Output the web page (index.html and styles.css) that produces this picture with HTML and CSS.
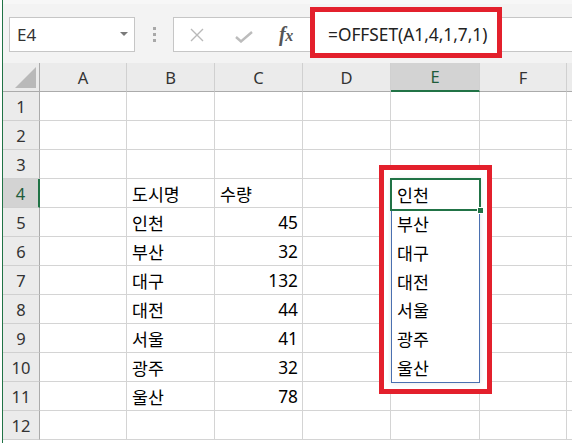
FILE: index.html
```html
<!DOCTYPE html>
<html lang="ko">
<head>
<meta charset="utf-8">
<title>OFFSET</title>
<link rel="stylesheet" href="styles.css">
</head>
<body>
<div class="app">
  <div class="edge"></div>
  <div class="main">
    <div class="fbar">
      <div class="namebox">
        <span class="name">E4</span>
        <span class="caret"></span>
      </div>
      <div class="grip"><i></i><i></i><i></i></div>
      <div class="formula">
        <svg class="ico" width="16" height="16" viewBox="0 0 16 16"><path d="M2 2 L14 14 M14 2 L2 14" stroke="#b9b9b9" stroke-width="1.4" fill="none"/></svg>
        <svg class="ico chk" width="18" height="12" viewBox="0 0 18 12"><path d="M1 6 L6 10.5 L17 1" stroke="#bcbcbc" stroke-width="2.4" fill="none"/></svg>
        <span class="fx">f<span class="x">x</span></span>
      </div>
    </div>
    <div class="sheet">
      <div class="corner"><span class="tri"></span></div>
      <div class="ch">A</div><div class="ch">B</div><div class="ch">C</div><div class="ch">D</div><div class="ch sel">E</div><div class="ch">F</div><div class="ch last"></div>

      <div class="rh">1</div><div class="c"></div><div class="c"></div><div class="c"></div><div class="c"></div><div class="c"></div><div class="c"></div><div class="c"></div>
      <div class="rh">2</div><div class="c"></div><div class="c"></div><div class="c"></div><div class="c"></div><div class="c"></div><div class="c"></div><div class="c"></div>
      <div class="rh">3</div><div class="c"></div><div class="c"></div><div class="c"></div><div class="c"></div><div class="c"></div><div class="c"></div><div class="c"></div>
      <div class="rh sel">4</div><div class="c"></div><div class="c">도시명</div><div class="c">수량</div><div class="c"></div><div class="c"></div><div class="c"></div><div class="c"></div>
      <div class="rh">5</div><div class="c"></div><div class="c">인천</div><div class="c num">45</div><div class="c"></div><div class="c"></div><div class="c"></div><div class="c"></div>
      <div class="rh">6</div><div class="c"></div><div class="c">부산</div><div class="c num">32</div><div class="c"></div><div class="c"></div><div class="c"></div><div class="c"></div>
      <div class="rh">7</div><div class="c"></div><div class="c">대구</div><div class="c num">132</div><div class="c"></div><div class="c"></div><div class="c"></div><div class="c"></div>
      <div class="rh">8</div><div class="c"></div><div class="c">대전</div><div class="c num">44</div><div class="c"></div><div class="c"></div><div class="c"></div><div class="c"></div>
      <div class="rh">9</div><div class="c"></div><div class="c">서울</div><div class="c num">41</div><div class="c"></div><div class="c"></div><div class="c"></div><div class="c"></div>
      <div class="rh">10</div><div class="c"></div><div class="c">광주</div><div class="c num">32</div><div class="c"></div><div class="c"></div><div class="c"></div><div class="c"></div>
      <div class="rh">11</div><div class="c"></div><div class="c">울산</div><div class="c num">78</div><div class="c"></div><div class="c"></div><div class="c"></div><div class="c"></div>
      <div class="rh">12</div><div class="c"></div><div class="c"></div><div class="c"></div><div class="c"></div><div class="c"></div><div class="c"></div><div class="c"></div>
    </div>
  </div>

  <div class="mark mark-formula">=OFFSET(A1,4,1,7,1)</div>

  <div class="mark mark-spill">
    <div class="spill">
      <div class="si active">인천<span class="handle"></span></div>
      <div class="si">부산</div>
      <div class="si">대구</div>
      <div class="si">대전</div>
      <div class="si">서울</div>
      <div class="si">광주</div>
      <div class="si">울산</div>
    </div>
  </div>
</div>
</body>
</html>
```
FILE: styles.css
```css
* { box-sizing: border-box; }
html, body { margin: 0; padding: 0; }
body {
  width: 572px;
  height: 443px;
  overflow: hidden;
  background: #fff;
  font-family: "Noto Sans", "Noto Sans CJK KR", sans-serif;
  color: #000;
}
.app {
  position: relative;
  display: flex;
  width: 572px;
  height: 443px;
}
.edge {
  width: 3px;
  flex: none;
  background: #fff;
  border-right: 1px solid #217346;
}
.main {
  flex: 1;
  display: flex;
  flex-direction: column;
  min-width: 0;
}
.fbar {
  height: 63px;
  flex: none;
  background: #f3f3f3;
  border-top: 4px solid #f7f7f7;
  padding-top: 13px;
  padding-bottom: 11px;
  display: flex;
}
.namebox {
  margin-left: 6px;
  width: 126px;
  background: #fff;
  border: 1px solid #c6c6c6;
  display: flex;
  align-items: center;
  justify-content: space-between;
  padding: 0 6px 0 7px;
}
.name {
  font-size: 17px;
  color: #333;
  line-height: 1;
}
.caret {
  width: 0;
  height: 0;
  border-left: 4px solid transparent;
  border-right: 4px solid transparent;
  border-top: 4px solid #7a7a7a;
  margin-bottom: 1px;
}
.grip {
  width: 38px;
  display: flex;
  flex-direction: column;
  align-items: center;
  justify-content: center;
  gap: 3px;
}
.grip i {
  width: 3px;
  height: 3px;
  background: #a8a8a8;
}
.formula {
  flex: 1;
  background: #fff;
  border: 1px solid #c6c6c6;
  border-right: none;
  display: flex;
  align-items: center;
  padding-left: 15px;
}
.ico { display: block; flex: none; }
.chk { margin-left: 30px; margin-top: 4px; }
.fx {
  margin-left: 26px;
  font-family: "Liberation Serif", serif;
  font-style: italic;
  font-weight: bold;
  font-size: 20px;
  color: #555;
  letter-spacing: -0.5px;
}
.fx .x { font-size: 16px; }

.sheet {
  display: grid;
  grid-template-columns: 37px 87px 88px 88px 88px 89px 87px 1fr;
  grid-auto-rows: 29px;
  font-size: 17.3px;
}
.corner {
  background: #ebebeb;
  border-right: 1px solid #ababab;
  border-bottom: 1px solid #ababab;
  display: flex;
  align-items: flex-end;
  justify-content: flex-end;
  padding: 0 3px 3px 0;
}
.tri {
  width: 0;
  height: 0;
  border-left: 21px solid transparent;
  border-bottom: 21px solid #b9b9b9;
}
.ch {
  background: #ebebeb;
  border-right: 1px solid #d0d0d0;
  border-bottom: 1px solid #ababab;
  display: flex;
  align-items: center;
  justify-content: center;
  font-size: 16.5px;
  color: #333;
}
.ch.sel {
  background: #d3d3d3;
  border-bottom: 2px solid #217346;
  color: #1e5c3a;
}
.ch.last { border-right: none; }
.rh {
  background: #ebebeb;
  border-right: 1px solid #ababab;
  border-bottom: 1px solid #d0d0d0;
  display: flex;
  align-items: center;
  justify-content: center;
  font-size: 16.5px;
  color: #333;
}
.rh.sel {
  background: #d3d3d3;
  border-right: 2px solid #217346;
  color: #1e5c3a;
}
.c {
  border-right: 1px solid #d4d4d4;
  border-bottom: 1px solid #d4d4d4;
  display: flex;
  align-items: center;
  padding: 0 4px 0 5px;
  white-space: nowrap;
}
.c.num { justify-content: flex-end; }

.mark {
  position: absolute;
  border: 5px solid #e3202c;
  background: #fff;
}
.mark-formula {
  left: 310px;
  top: 7px;
  width: 192px;
  height: 51px;
  padding: 4px 0 0 13px;
  display: flex;
  align-items: center;
  font-size: 17.3px;
  color: #222;
  white-space: nowrap;
}
.mark-spill {
  left: 379px;
  top: 165px;
  width: 113px;
  height: 229px;
  padding: 9px 7px 6px 7px;
}
.spill {
  border: 1px solid #4a70b0;
  box-shadow: 0 0 5px rgba(0, 0, 0, 0.12);
  height: 204px;
  display: flex;
  flex-direction: column;
}
.si {
  flex: 1;
  display: flex;
  align-items: center;
  padding-left: 5px;
  font-size: 17.3px;
  position: relative;
}
.si.active::before {
  content: "";
  position: absolute;
  left: -2px;
  right: -2px;
  top: -2px;
  bottom: -2px;
  border: 2px solid #217346;
}
.handle {
  position: absolute;
  right: -5px;
  bottom: -5px;
  width: 7px;
  height: 7px;
  background: #217346;
  border: 1px solid #fff;
}
```
